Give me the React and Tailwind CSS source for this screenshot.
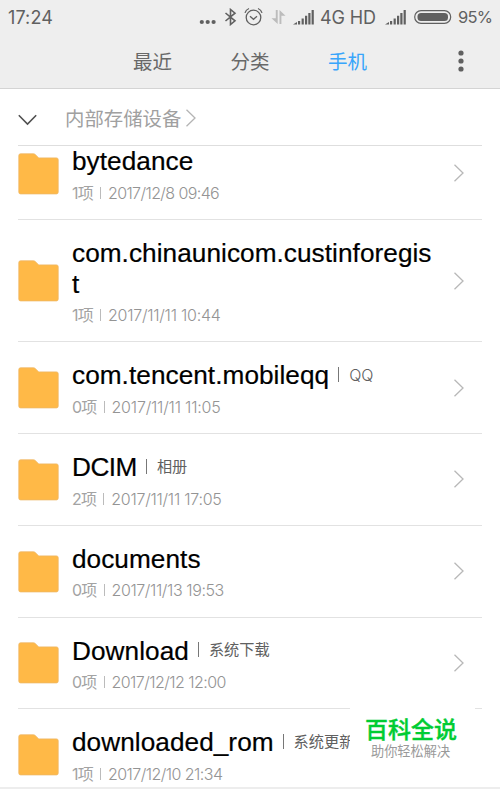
const TABS = [
  { id: 'recent', label: '最近' },
  { id: 'category', label: '分类' },
  { id: 'phone', label: '手机' },
]

const FOLDERS = [
  { name: 'bytedance', count: '1项', date: '2017/12/8 09:46', spacing: 'tracking-[-0.600px]' },
  { name: 'com.chinaunicom.custinforegist', count: '1项', date: '2017/11/11 10:44', spacing: 'tracking-[-0.250px]', tall: true },
  { name: 'com.tencent.mobileqq', tag: 'QQ', count: '0项', date: '2017/11/11 11:05', spacing: 'tracking-[-0.200px]' },
  { name: 'DCIM', tag: '相册', count: '2项', date: '2017/11/11 17:05', spacing: 'tracking-[-0.250px]', tight: true },
  { name: 'documents', count: '0项', date: '2017/11/13 19:53', spacing: 'tracking-[-0.400px]' },
  { name: 'Download', tag: '系统下载', count: '0项', date: '2017/12/12 12:00', spacing: 'tracking-[-0.550px]' },
  { name: 'downloaded_rom', tag: '系统更新', count: '1项', date: '2017/12/10 21:34', spacing: 'tracking-[-0.550px]' },
]

function SignalIcon({ className }) {
  return (
    <svg className={className} width="22" height="16" viewBox="0 0 22 16" fill="currentColor">
      <path d="M0 15.5 4 13v2.5zM5 12h2.2v3.5H5zM8.6 9.5h2.2v6H8.6zM12 6.8h2.2v8.7H12zM15.3 4h2.2v11.5h-2.2zM18.6 1h2.2v14.5h-2.2z" />
    </svg>
  )
}

function StatusBar() {
  return (
    <div className="flex h-[34px] items-center pl-2 text-[#606060]">
      <span className="w-[190px] pt-px font-['Inter'] text-[18px] tracking-[0.100px]">17:24</span>
      <svg width="20" height="34" viewBox="0 0 20 34" fill="currentColor">
        <circle cx="3.8" cy="22" r="2.1" />
        <circle cx="9.7" cy="22" r="2.1" />
        <circle cx="15.6" cy="22" r="2.1" />
      </svg>
      <svg className="ml-1.5" width="13" height="18" viewBox="0 0 13 18" fill="none" stroke="currentColor" strokeWidth="1.6">
        <path d="m1.500 5 9.500 7.800-4.500 3.700V1.500L11 5.200 1.500 13" />
      </svg>
      <svg className="ml-[7px]" width="19" height="20" viewBox="0 0 19 20" fill="none" stroke="currentColor" strokeWidth="1.300">
        <circle cx="9.500" cy="10.500" r="7.300" />
        <path d="m6 9.300 3.500 3L13 9.300M1 5.800Q1.800 2.800 5 1.500M18 5.800Q17.200 2.800 14 1.500" />
      </svg>
      <svg className="ml-2 text-[#bcbcbc]" width="15" height="16" viewBox="0 0 15 16" fill="currentColor">
        <path d="M4.800 1h1.900v14L.500 9.200h4.300zM8.500 1l6 5.800h-4.100V15H8.500z" />
      </svg>
      <SignalIcon className="ml-[7px]" />
      <span className="ml-[5px] w-[65px] whitespace-nowrap pt-px font-['Inter'] text-[18px] tracking-[-0.100px]">4G HD</span>
      <SignalIcon />
      <svg className="ml-[7px]" width="38" height="14" viewBox="0 0 38 14">
        <rect x=".7" y=".7" width="36" height="12.600" rx="6.300" fill="none" stroke="currentColor" strokeWidth="1.200" />
        <rect x="3.500" y="3" width="30.500" height="8" rx="3.500" fill="currentColor" />
      </svg>
      <span className="ml-[6px] pt-px font-['Inter'] text-[16.500px] tracking-[-0.700px]">95%</span>
    </div>
  )
}

function Chevron({ className }) {
  return (
    <svg className={className} width="12" height="18" viewBox="0 0 12 18" fill="none" stroke="currentColor" strokeWidth="1.300">
      <path d="m1.500.800 8.500 8.200-8.500 8.200" />
    </svg>
  )
}

function FolderIcon() {
  return (
    <svg className="mt-px shrink-0" width="41" height="42" viewBox="0 0 41 42">
      <path
        d="M2.500.800h13q1 0 1.700.700l3 2.900q.600.500 1.500.500H38.500q1.700 0 1.700 1.700v32.600q0 1.700-1.700 1.700h-36Q.800 40.900.800 39.200V2.500Q.800.800 2.500.800z"
        fill="#ffb947"
        stroke="#efb765"
        strokeWidth=".8"
      />
    </svg>
  )
}

function FolderRow({ folder }) {
  return (
    <div
      className={[
        'mx-[18px] flex shrink-0 items-center border-b border-[#e2e2e2]',
        folder.tall ? 'h-[122.500px]' : 'h-[91.750px]',
      ].join(' ')}
    >
      <FolderIcon />
      <div className="ml-[13px] w-[366px] pt-[3px]">
        <div className="flex items-center pr-1">
          <span
            className={[
              'min-w-0 break-all text-[26.200px] leading-[30.500px] text-black [-webkit-text-stroke:0.200px_black]',
              folder.tight ? 'tracking-[-0.500px]' : 'tracking-[0.050px]',
            ].join(' ')}
          >
            {folder.name}
          </span>
          {folder.tag ? (
            <span className="-mt-[2px] ml-[9px] flex shrink-0 items-center font-['Inter','Noto_Sans_CJK_SC',sans-serif] text-[15.200px] leading-none text-[#606060]">
              <span className="mr-[10px] h-[15px] w-px bg-[#777]" />
              <span className={folder.tag === 'QQ' ? 'text-[16px] font-light' : ''}>{folder.tag}</span>
            </span>
          ) : null}
        </div>
        <div className="mt-[5px] flex items-center font-['Inter','Noto_Sans_CJK_SC',sans-serif] text-[16px] leading-[22px] text-[#a3a3a3]">
          <span className="tracking-[-0.800px]">{folder.count}</span>
          <span className="mx-[7px] h-3 w-px bg-[#bbb]" />
          <span className={['font-light text-[#949494]', folder.spacing].join(' ')}>{folder.date}</span>
        </div>
      </div>
      <Chevron className="ml-[15px] shrink-0 text-[#b8b8b8]" />
    </div>
  )
}

export default function App() {
  return (
    <div className="relative flex h-[790px] w-[500px] flex-col overflow-hidden bg-white font-['Liberation_Sans','Noto_Sans_CJK_SC',sans-serif]">
      <header className="h-[89px] shrink-0 border-b border-[#d4d4d4] bg-[#eeeeee]">
        <StatusBar />
        <nav className="flex h-[54px] items-center pl-[133px] font-['Noto_Sans_CJK_SC',sans-serif] text-[19.500px] text-[#686868]">
          {TABS.map((tab) => (
            <span key={tab.id} className={tab.id === 'phone' ? 'text-[#38a5fb]' : 'w-[97.500px]'}>
              {tab.label}
            </span>
          ))}
          <svg className="ml-[91px]" width="6" height="22" viewBox="0 0 6 22" fill="#606060">
            <circle cx="3" cy="3" r="2.600" />
            <circle cx="3" cy="11" r="2.600" />
            <circle cx="3" cy="19" r="2.600" />
          </svg>
        </nav>
      </header>

      <div className="mx-[18px] flex h-[57px] shrink-0 items-center border-b border-[#dedede] pt-[2px] text-[19.400px] text-[#a0a0a0]">
        <svg className="mt-1" width="20" height="12" viewBox="0 0 20 12" fill="none" stroke="#505050" strokeWidth="1.600">
          <path d="m.800 1.200 8.700 8.800 8.700-8.800" />
        </svg>
        <span className="ml-[27px] mr-[4px] pt-[3px]">内部存储设备</span>
        <Chevron className="text-[#b4b4b4]" />
      </div>

      <main className="flex min-h-0 flex-1 flex-col overflow-hidden">
        <div className="-mt-[18px] flex flex-col">
          {FOLDERS.map((folder) => (
            <FolderRow key={folder.name} folder={folder} />
          ))}
        </div>
      </main>

      <footer className="h-[3px] shrink-0 border-t-2 border-[#ededed] bg-white" />

      <div className="absolute left-[350px] top-[706px] flex h-[80px] w-[125px] flex-col items-start bg-white pl-[15px] pt-[8px] font-['Noto_Sans_CJK_SC',sans-serif]">
        <span className="text-[23px] font-medium leading-[28px] text-[#00cc33] [-webkit-text-stroke:0.400px_#00cc33]">百科全说</span>
        <span className="ml-[6px] mt-px text-[13.200px] leading-[16px] text-[#999]">助你轻松解决</span>
      </div>
    </div>
  )
}
